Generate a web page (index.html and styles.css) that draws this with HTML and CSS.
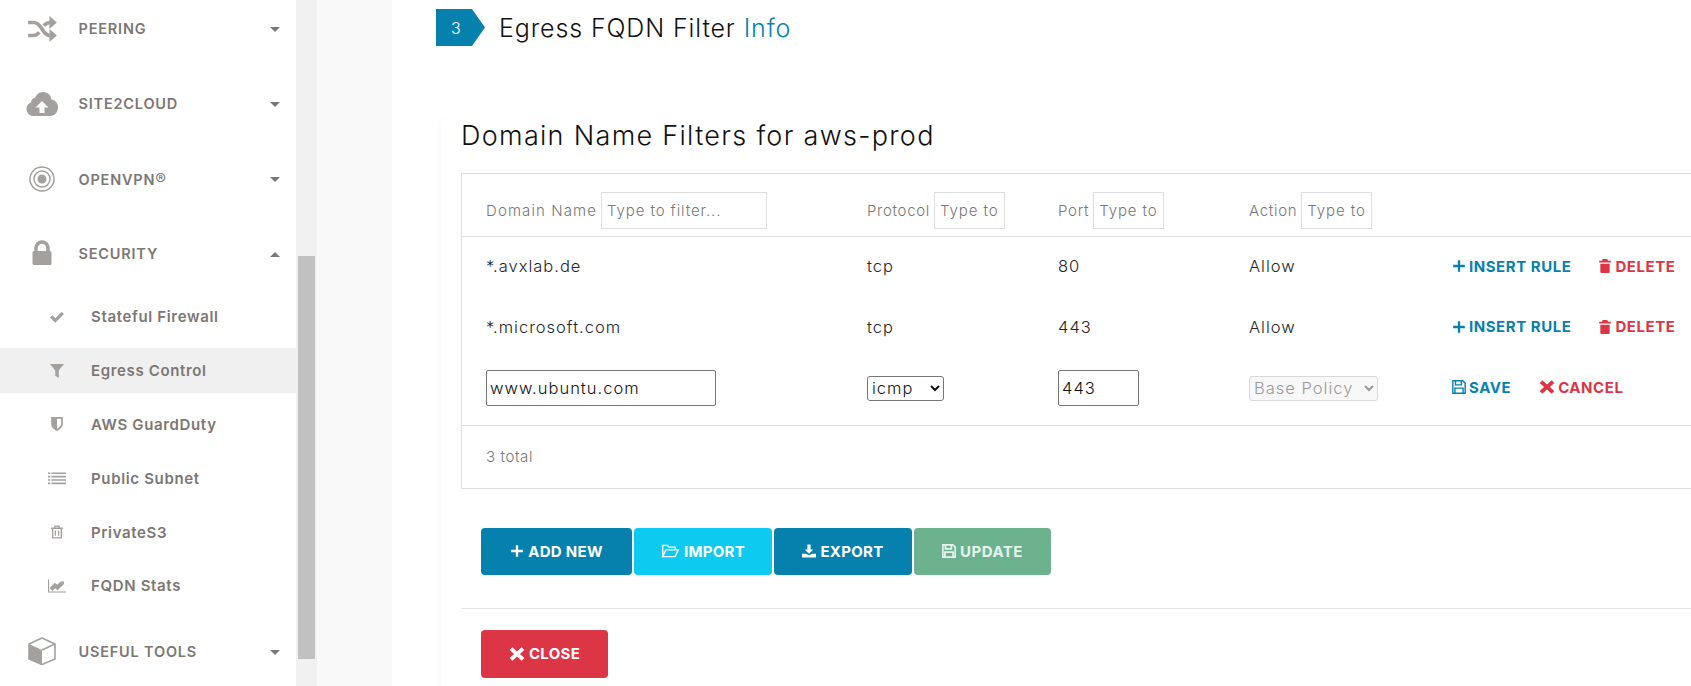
FILE: index.html
```html
<!DOCTYPE html>
<html lang="en">
<head>
<meta charset="utf-8">
<title>Egress FQDN Filter</title>
<link rel="stylesheet" href="styles.css">
</head>
<body>
<div class="app">
  <nav class="sidebar">
    <div class="group first"><svg class="gi" viewBox="0 0 32 28"><path class="ln" d="M1 7h6c5 0 7 4 9 7s4 7 9 7h1M1 21h6c3 0 4.500-1.500 6-3.500M18 10.500c1.500-2 3.500-3.500 7-3.500h1"/><path d="M24 0l8 7-8 7zM24 14l8 7-8 7z"/></svg><span class="gl">PEERING</span><i class="caret"></i></div>
    <div class="group"><svg class="gi" viewBox="0 0 32 24"><path d="M7 24a7 7 0 0 1-2-13.500C5 8 7 6 9 6c1-3 4-6 8-6 4.500 0 8 3 8.500 7.500 3.500.5 6.500 3.500 6.500 7.500 0 5-3 9-8 9z"/><path class="wh" d="M16 9l6.500 6.500H18.500V21h-5v-5.500H9.500z"/></svg><span class="gl">SITE2CLOUD</span><i class="caret"></i></div>
    <div class="group"><svg class="gi" viewBox="0 0 32 26"><circle class="ring" cx="16" cy="13" r="12"/><circle class="ring" cx="16" cy="13" r="8"/><circle cx="16" cy="13" r="4.500"/></svg><span class="gl">OPENVPN<span class="reg">®</span></span><i class="caret"></i></div>
    <div class="group security"><svg class="gi" viewBox="0 0 32 24"><path class="ln thick" d="M10 11V7a6 6 0 0 1 12 0v4"/><rect x="6.500" y="10" width="19" height="14" rx="1.500"/></svg><span class="gl">SECURITY</span><i class="caret up"></i></div>
    <div class="sub"><div class="sublink"><svg class="si" viewBox="0 0 14 12"><path d="M1 6.500l2-2 2.500 2.500L11 1.500l2 2L5.500 11z"/></svg><span>Stateful Firewall</span></div></div>
    <div class="sub"><div class="sublink active"><svg class="si" viewBox="0 0 14 12"><path d="M1 0h12L8.500 5.500V12l-3-2V5.500z"/></svg><span>Egress Control</span></div></div>
    <div class="sub"><div class="sublink"><svg class="si" viewBox="0 0 14 12"><path fill-rule="evenodd" d="M2 0h10v6c0 3-3 5-5 6-2-1-5-3-5-6zM7 1.500V10c2-1 3.500-2.500 3.500-4V1.500z"/></svg><span>AWS GuardDuty</span></div></div>
    <div class="sub"><div class="sublink"><svg class="si" viewBox="0 0 16 12"><path d="M0 1h2v1.500H0zM3 1h13v1.500H3zM0 4h2v1.500H0zM3 4h13v1.500H3zM0 7h2v1.500H0zM3 7h13v1.500H3zM0 10h2v1.500H0zM3 10h13v1.500H3z"/></svg><span>Public Subnet</span></div></div>
    <div class="sub"><div class="sublink"><svg class="si" viewBox="0 0 14 13"><path class="ln small" d="M3 3.500V12h8V3.500M1.500 3h11M5 3V1h4v2M5.500 5v5M8.500 5v5"/></svg><span>PrivateS3</span></div></div>
    <div class="sub"><div class="sublink"><svg class="si wide" viewBox="0 0 18 13"><path class="ln small" d="M.5 0v12.500H18"/><path class="ln" d="M3 10l4-4 2.500 2L14 3.500" stroke-width="1.500"/><path d="M12.500 2H16v3.500z"/></svg><span>FQDN Stats</span></div></div>
    <div class="group last"><svg class="gi cube" viewBox="0 0 28 28"><path d="M14 13v14.500L1 22V7z"/><path class="ln small2" d="M1 7l13-6 13 6v15l-13 5.500L1 22zM14 13l13-6"/></svg><span class="gl">USEFUL TOOLS</span><i class="caret"></i></div>
  </nav>
  <div class="scrollbar"><div class="thumb"></div></div>
  <div class="gutter"></div>
  <main class="main">
    <header class="step">
      <div class="badge">3</div>
      <h2 class="step-title">Egress FQDN Filter <a class="info">Info</a></h2>
    </header>
    <section class="card">
      <h3 class="card-title">Domain Name Filters for aws-prod</h3>
      <div class="box">
        <table class="rules">
          <colgroup><col class="c1"><col class="c2"><col class="c3"><col class="c4"><col class="c5"><col></colgroup>
          <thead>
            <tr>
              <th class="th-wide"><span class="flt"><span>Domain Name</span><input class="f-wide" placeholder="Type to filter..."></span></th>
              <th><span class="flt"><span>Protocol</span><input class="f-small" placeholder="Type to filter..."></span></th>
              <th><span class="flt"><span>Port</span><input class="f-small" placeholder="Type to filter..."></span></th>
              <th><span class="flt"><span>Action</span><input class="f-small" placeholder="Type to filter..."></span></th>
              <th></th><th></th>
            </tr>
          </thead>
          <tbody>
            <tr class="r1">
              <td>*.avxlab.de</td><td>tcp</td><td>80</td><td>Allow</td>
              <td colspan="2"><span class="acts">
                <a class="act blue"><svg viewBox="0 0 12 12"><path d="M5 1h2v4h4v2H7v4H5V7H1V5h4z"/></svg>INSERT RULE</a>
                <a class="act red"><svg viewBox="0 0 12 12"><path d="M4 0h4l.500 1.500H11V3H1V1.500h2.500zM2 4h8v7a1 1 0 0 1-1 1H3a1 1 0 0 1-1-1z"/></svg>DELETE</a>
              </span></td>
            </tr>
            <tr class="r2">
              <td>*.microsoft.com</td><td>tcp</td><td>443</td><td>Allow</td>
              <td colspan="2"><span class="acts">
                <a class="act blue"><svg viewBox="0 0 12 12"><path d="M5 1h2v4h4v2H7v4H5V7H1V5h4z"/></svg>INSERT RULE</a>
                <a class="act red"><svg viewBox="0 0 12 12"><path d="M4 0h4l.500 1.500H11V3H1V1.500h2.500zM2 4h8v7a1 1 0 0 1-1 1H3a1 1 0 0 1-1-1z"/></svg>DELETE</a>
              </span></td>
            </tr>
            <tr class="r3">
              <td><input class="ed-domain" value="www.ubuntu.com"></td>
              <td><select class="ed-proto"><option>icmp</option></select></td>
              <td><input class="ed-port" value="443"></td>
              <td><select class="ed-policy" disabled><option>Base Policy</option></select></td>
              <td colspan="2"><span class="acts edit">
                <a class="act blue"><svg viewBox="0 0 12 12"><path class="ol" d="M.7.700h8.600l2 2v8.600H.7zM3 .700v3.500h5V.700M2.500 11.300V7h7v4.300"/></svg>SAVE</a>
                <a class="act red"><svg class="x" viewBox="0 0 12 12"><path d="M2.500 1L6 4.200 9.500 1 11.500 3 8.200 6l3.300 3-2 2L6 7.800 2.500 11 .5 9l3.300-3L.5 3z"/></svg>CANCEL</a>
              </span></td>
            </tr>
          </tbody>
        </table>
        <div class="total">3 total</div>
      </div>
      <div class="btns">
        <button class="btn b-add"><svg viewBox="0 0 12 12"><path d="M5 1h2v4h4v2H7v4H5V7H1V5h4z"/></svg>ADD NEW</button>
        <button class="btn b-imp"><svg class="wideic" viewBox="0 0 15 12"><path class="ol" d="M.8 10.500V1.200h4l1.300 1.500h5.400v2M.8 10.800L3.500 5h10.700l-2.800 5.800z"/></svg>IMPORT</button>
        <button class="btn b-exp"><svg viewBox="0 0 13 12"><path d="M5 0h3v4.500h2.500L6.500 8.500l-4-4H5zM0 8.500h3.500L6.500 10l3-1.500H13V12H0z"/></svg>EXPORT</button>
        <button class="btn b-upd"><svg viewBox="0 0 12 12"><path class="ol fat" d="M.7.700h8.600l2 2v8.600H.7zM3 .700v3.500h5V.700M2.500 11.300V7h7v4.300"/></svg>UPDATE</button>
      </div>
      <hr class="rule">
      <button class="btn b-close"><svg class="x" viewBox="0 0 12 12"><path d="M2.500 1L6 4.200 9.500 1 11.500 3 8.200 6l3.300 3-2 2L6 7.800 2.500 11 .5 9l3.300-3L.5 3z"/></svg>CLOSE</button>
    </section>
  </main>
</div>
</body>
</html>
```
FILE: styles.css
```css
* { box-sizing: border-box; }
html, body { margin: 0; height: 100%; overflow: hidden; background: #fff; }
body { font-family: Inter, "Liberation Sans", sans-serif; color: #212529; }
.app { display: flex; height: 686px; overflow: hidden; }

/* sidebar */
.sidebar { width: 296px; flex: none; background: #fff; color: #7b7774; overflow: hidden; }
.group { height: 75px; display: flex; align-items: center; padding-left: 26px; padding-right: 16px; font-size: 14.500px; font-weight: 600; letter-spacing: .8px; }
.group.first { margin-top: -9px; }
.group.security { height: 74px; }
.group.last { height: 77px; }
.reg { font-size: 16px; font-weight: 400; }
.gi { width: 32px; height: 26px; margin-right: 20.500px; flex: none; fill: #a3a09d; }
.gi.cube { height: 28px; }
.gl { flex: 1; }
.ln { fill: none; stroke: #a3a09d; stroke-width: 4; }
.ln.thick { stroke-width: 3.500; }
.ln.small { stroke-width: 1.200; }
.ln.small2 { stroke-width: 1.600; stroke-linejoin: round; }
.wh { fill: #fff; }
.ring { fill: none; stroke: #a3a09d; stroke-width: 1.500; }
.caret { width: 0; height: 0; border-left: 5px solid transparent; border-right: 5px solid transparent; border-top: 5px solid #7b7774; margin-top: 2px; }
.caret.up { border-top: 0; border-bottom: 5px solid #7b7774; }
.sub { height: 53.800px; display: flex; align-items: center; }
.sublink { width: 100%; height: 45px; display: flex; align-items: center; padding-left: 48px; font-size: 15px; font-weight: 600; letter-spacing: .65px; }
.sublink.active { background: #f0f0f0; }
.si { width: 18px; height: 14px; margin-right: 25px; flex: none; fill: #a3a09d; }
.scrollbar { width: 21px; flex: none; background: #f1f1f1; padding: 256px 2px 0; }
.thumb { height: 403px; background: #c1c1c1; }
.gutter { width: 75px; flex: none; background: #f9f9f9; }

/* main */
.main { flex: 1; min-width: 0; overflow: hidden; padding-left: 44px; }
.step { display: flex; align-items: center; margin-top: 9px; height: 37px; }
.badge { width: 49px; height: 37px; background: #0681ae; color: #fff; font-size: 16px; font-weight: 300; display: flex; align-items: center; padding-left: 15px; clip-path: polygon(0 0, 36px 0, 100% 50%, 36px 100%, 0 100%); }
.step-title { margin: 0 0 0 14px; font-size: 25px; font-weight: 300; color: #111; letter-spacing: .87px; white-space: nowrap; }
.info { color: #0681ae; }
.card { margin: 73px 0 0 5px; padding-left: 20px; width: 1400px; height: 600px; box-shadow: -3px 0 5px rgba(0,0,0,.025); }
.card-title { margin: 0 0 20px; height: 34px; line-height: 34px; font-size: 27px; font-weight: 300; color: #111; letter-spacing: 1.300px; white-space: nowrap; }
.box { border: 1px solid #ddd; width: 1320px; height: 316px; }
.rules { border-collapse: collapse; table-layout: fixed; width: 100%; font-size: 16.500px; font-weight: 300; letter-spacing: 1px; }
.c1 { width: 381px; } .c2 { width: 191px; } .c3 { width: 191px; } .c4 { width: 203px; } .c5 { width: 190px; }
th, td { padding: 0 0 0 24px; text-align: left; font-weight: 300; white-space: nowrap; }
thead tr { height: 62px; border-bottom: 1px solid #ddd; }
th { font-size: 15px; color: #777; letter-spacing: .7px; }
.th-wide { letter-spacing: 1.100px; }
.flt { display: flex; align-items: center; gap: 4px; position: relative; top: 6px; }
.flt input { height: 37px; border: 1px solid #ddd; padding: 0 5px; font: 300 15px Inter, sans-serif; letter-spacing: .9px; outline: 0; }
.flt input::placeholder { color: #777; opacity: 1; }
.f-wide { width: 166px; }
.f-small { width: 71px; }
.r1 { height: 60px; } .r2 { height: 61px; } .r3 { height: 68px; }
.r3 td { padding-bottom: 6px; }
input, select { font-family: Inter, sans-serif; }
.ed-domain, .ed-port { height: 36px; border: 1px solid #767676; border-radius: 2px; padding: 0 3px; font-size: 16.500px; font-weight: 300; letter-spacing: 1px; color: #111; }
.ed-domain { width: 230px; }
.ed-port { width: 81px; }
.ed-proto, .ed-policy { height: 25px; font-size: 16.500px; font-weight: 300; letter-spacing: 1px; border-radius: 3px; }
.ed-proto { width: 77px; color: #111; border: 1px solid #767676; background: #fff; }
.ed-policy { width: 129px; color: #999; border: 1px solid #d8d8d8; background: #f8f8f8; opacity: 1; }
.acts { display: flex; align-items: center; gap: 27px; font-size: 15px; font-weight: 700; }
.acts.edit { gap: 28px; margin-top: -2px; }
.act { display: inline-flex; align-items: center; gap: 3px; letter-spacing: .55px; }
.act svg { width: 14px; height: 14px; fill: currentColor; }
.blue { color: #0681ae; } .red { color: #dc3545; }
.act .x { width: 16px; height: 16px; }
.ol { fill: none; stroke: currentColor; stroke-width: 1.200; }
.ol.fat { stroke-width: 1.500; }
.total { border-top: 1px solid #ddd; height: 63px; padding: 21px 0 0 24px; font-size: 15px; font-weight: 300; color: #777; letter-spacing: .6px; }

.btns { display: flex; gap: 2px; margin: 39px 0 0 20px; }
.btn { height: 47px; border: 0; border-radius: 4px; color: #fff; font: 700 15px Inter, sans-serif; letter-spacing: .3px; display: flex; align-items: center; justify-content: center; gap: 4px; padding-bottom: 2px; }
.btn svg { width: 14px; height: 14px; fill: currentColor; }
.btn .wideic { width: 19px; }
.btn .x { width: 16px; height: 16px; }
.b-add { width: 151px; background: #0681ae; }
.b-imp { width: 138px; background: #0dcaf0; }
.b-exp { width: 138px; background: #0681ae; }
.b-upd { width: 137px; background: #6cb28e; color: #e6f2ec; letter-spacing: .5px; }
.b-upd .ol { fill: none; }
.rule { border: 0; border-top: 1px solid #e5e5e5; margin: 33px 0 21px; width: 1320px; }
.b-close { width: 127px; height: 48px; background: #dc3545; margin-left: 20px; }
```
